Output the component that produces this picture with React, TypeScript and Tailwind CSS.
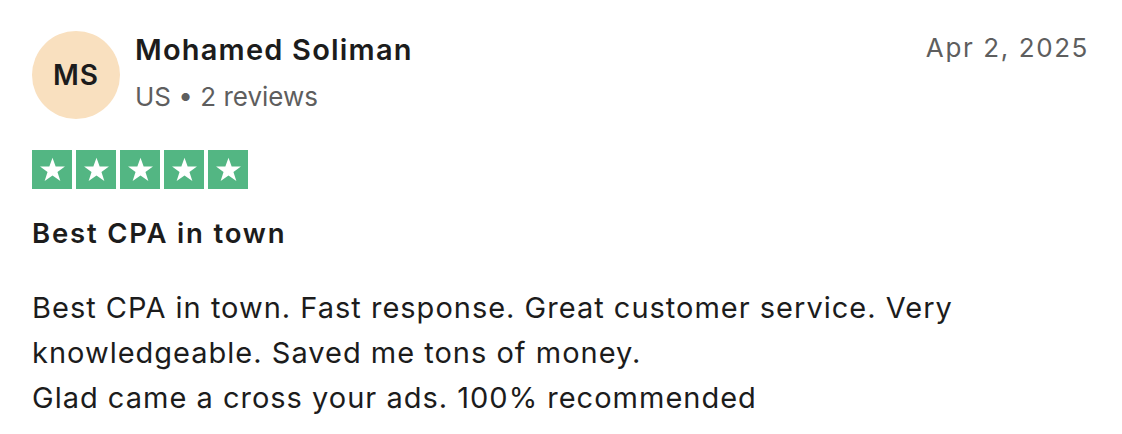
import React from 'react';

const Star: React.FC = () => (
  <div className="flex h-[39px] w-[40px] items-center justify-center bg-[#53b683]">
    <svg viewBox="0 0 24 24" className="h-[29px] w-[29px]" fill="#ffffff">
      <path d="M12 2.2l2.6 7.3h7.7l-6.2 4.6 2.4 7.5L12 17l-6.5 4.6 2.4-7.5L1.7 9.5h7.7z" />
    </svg>
  </div>
);

const App: React.FC = () => {
  return (
    <div
      className="h-[434px] w-[1122px] bg-white px-[32px] pt-[30px] text-[#1c1c1c]"
      style={{ fontFamily: 'Inter, "Noto Sans", sans-serif' }}
    >
      {/* header */}
      <div className="flex items-start justify-between">
        <div className="flex items-start gap-[15px]">
          <div className="mt-[1px] flex h-[88px] w-[88px] items-center justify-center rounded-full bg-[#f9e0bf] text-[28px] font-semibold tracking-[1px] text-[#1c1c1c]">
            MS
          </div>
          <div className="flex flex-col">
            <span className="text-[29px] font-semibold leading-[40px] tracking-[1.2px]">Mohamed Soliman</span>
            <span className="mt-[9px] text-[26px] leading-[36px] text-[#5e5e5e]">US • 2 reviews</span>
          </div>
        </div>
        <span className="mr-[1px] text-[26px] leading-[36px] tracking-[1.6px] text-[#5e5e5e]">Apr 2, 2025</span>
      </div>

      {/* rating */}
      <div className="mt-[31px] flex gap-[4px]">
        <Star />
        <Star />
        <Star />
        <Star />
        <Star />
      </div>

      <h2 className="mt-[24px] text-[27.5px] font-semibold leading-[40px] tracking-[1.8px]">Best CPA in town</h2>

      <p className="mt-[32px] max-w-[980px] text-[29px] leading-[45px] tracking-[1px] text-[#1c1c1c]">
        Best CPA in town. Fast response. Great customer service. Very knowledgeable. Saved me tons of money.
        <br />
        Glad came a cross your ads. 100% recommended
      </p>
    </div>
  );
};

export default App;
